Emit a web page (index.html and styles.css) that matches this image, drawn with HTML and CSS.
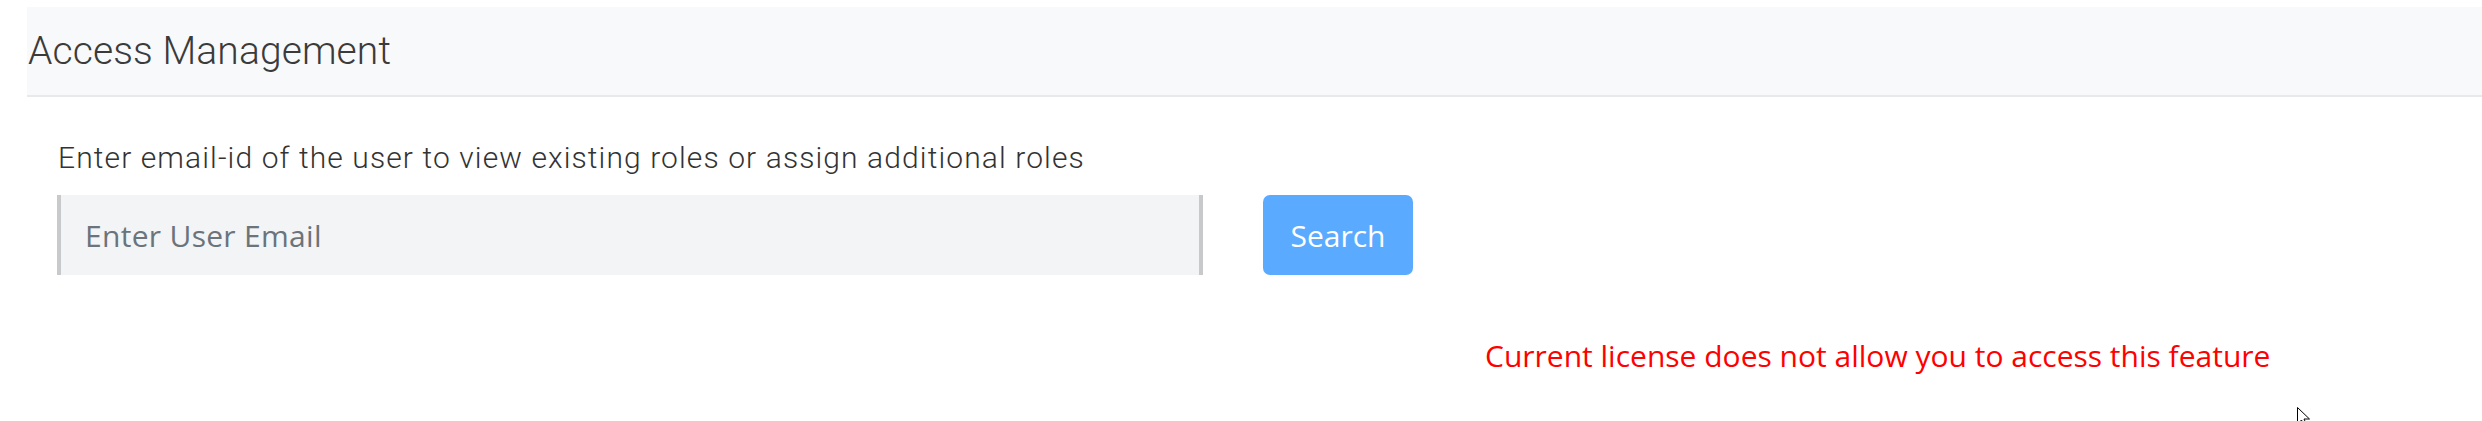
FILE: index.html
```html
<!DOCTYPE html>
<html lang="en">
<head>
<meta charset="utf-8">
<title>Access Management</title>
<link rel="stylesheet" href="styles.css">
</head>
<body>
<div class="page">
  <header class="panel-head">
    <h1 class="panel-title">Access Management</h1>
  </header>
  <section class="panel-body">
    <p class="hint">Enter email-id of the user to view existing roles or assign additional roles</p>
    <div class="search-row">
      <input class="email-input" type="text" placeholder="Enter User Email">
      <button class="search-btn" type="button">Search</button>
    </div>
    <p class="notice">Current license does not allow you to access this feature</p>
  </section>
  <svg class="cursor" width="14" height="20" viewBox="0 0 14 20" aria-hidden="true">
    <path d="M0.5 0.5 L0.5 17 L4.5 13 L7.5 19.5 L10 18.5 L7 12 L12.5 12 Z" fill="#fff" stroke="#000" stroke-width="1"/>
  </svg>
</div>
</body>
</html>
```

FILE: styles.css
```css
html, body {
  margin: 0;
  padding: 0;
  background: #ffffff;
}

.page {
  position: relative;
  width: 2482px;
  height: 421px;
  overflow: hidden;
  font-family: Roboto, "Liberation Sans", sans-serif;
}

.panel-head {
  margin: 7px 0 0 27px;
  height: 88px;
  background: #f8f9fa;
  border-bottom: 2px solid #e8e9eb;
  display: flex;
  align-items: center;
}

.panel-title {
  margin: 0;
  padding-left: 1px;
  font-family: Roboto, "Liberation Sans", sans-serif;
  font-weight: 300;
  font-size: 39px;
  line-height: 1;
  color: #3b3b3b;
  letter-spacing: 0.1px;
}

.panel-body {
  padding-left: 57px;
}

.hint {
  margin: 43px 0 0 1px;
  font-family: Roboto, "Liberation Sans", sans-serif;
  font-weight: 300;
  font-size: 30px;
  line-height: 35px;
  letter-spacing: 1.1px;
  color: #333333;
}

.search-row {
  margin-top: 20px;
  display: flex;
  align-items: stretch;
  gap: 60px;
  height: 80px;
}

.email-input {
  box-sizing: border-box;
  width: 1146px;
  height: 80px;
  margin: 0;
  padding: 0 0 0 24px;
  border: none;
  border-left: 4px solid #c8c9cb;
  border-right: 4px solid #c8c9cb;
  background: #f3f4f6;
  font-family: "Open Sans", sans-serif;
  font-size: 30px;
  letter-spacing: 0.3px;
  color: #333;
  outline: none;
}

.email-input::placeholder {
  color: #6b737b;
  opacity: 1;
}

.search-btn {
  box-sizing: border-box;
  width: 150px;
  height: 80px;
  margin: 0;
  padding: 0;
  border: none;
  border-radius: 7px;
  background: #5aabff;
  color: #ffffff;
  font-family: "Open Sans", sans-serif;
  font-size: 30px;
  cursor: pointer;
}

.notice {
  margin: 63px 0 0 1428px;
  font-family: "Open Sans", sans-serif;
  font-size: 30px;
  line-height: 36px;
  color: #ff0000;
}

.cursor {
  position: absolute;
  left: 2297px;
  top: 407px;
}
```
